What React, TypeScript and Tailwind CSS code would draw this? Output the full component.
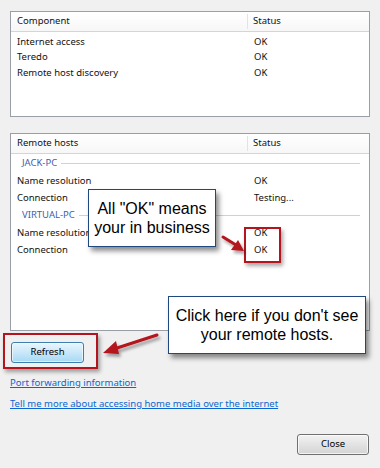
import React from "react";

const ui = { fontFamily: '"Noto Sans", "Open Sans", sans-serif' };
const callout = { fontFamily: '"Liberation Sans", Arial, sans-serif' };

function Header({ label }: { label: string }) {
  return (
    <div className="flex h-[20px] items-center border-b border-[#d5d5d5] bg-gradient-to-b from-white to-[#f7f7f7] text-[#111]">
      <div className="w-[237px] border-r border-[#e3e3e3] pl-[6px]">{label}</div>
      <div className="pl-[5px]">Status</div>
    </div>
  );
}

function Row({ name, status, h = "h-[15.5px]" }: { name: string; status: string; h?: string }) {
  return (
    <div className={`flex ${h} items-center text-[#111]`}>
      <div className="w-[237px] pl-[6px]">{name}</div>
      <div className="pl-[6px]">{status}</div>
    </div>
  );
}

function Group({ label }: { label: string }) {
  return (
    <div className="flex h-[18px] items-center gap-[4px] pl-[11px] pr-[9px] text-[#3e5fae]">
      <span>{label}</span>
      <div className="h-px flex-1 bg-[#c4d2ea]" />
    </div>
  );
}

export default function App() {
  return (
    <div className="relative h-[468px] w-[380px] overflow-hidden bg-[#f0f0f0] text-[9.5px]" style={ui}>
      <div className="flex flex-col px-[10px] pt-[11px]">
        <div className="h-[106px] w-[360px] border border-[#9a9ea6] bg-white">
          <Header label="Component" />
          <div className="pt-[2px]">
            <Row name="Internet access" status="OK" />
            <Row name="Teredo" status="OK" />
            <Row name="Remote host discovery" status="OK" />
          </div>
        </div>

        <div className="mt-[16px] h-[198px] w-[360px] border border-[#9a9ea6] bg-white">
          <Header label="Remote hosts" />
          <Group label="JACK-PC" />
          <Row name="Name resolution" status="OK" h="h-[18px]" />
          <Row name="Connection" status="Testing..." h="h-[16px]" />
          <Group label="VIRTUAL-PC" />
          <Row name="Name resolution" status="OK" h="h-[18px]" />
          <Row name="Connection" status="OK" h="h-[16px]" />
        </div>

        <button className="ml-[1px] mt-[11px] h-[21px] w-[73px] rounded-[3px] border border-[#3c7fb1] bg-gradient-to-b from-[#eaf6fd] to-[#a7d9f5] text-[9.5px] text-black shadow-[inset_0_0_0_1px_rgba(255,255,255,0.6)]">
          Refresh
        </button>

        <div className="mt-[13px] flex flex-col items-start gap-[7px] leading-[14px] text-[#0b66d0]">
          <a className="underline">Port forwarding information</a>
          <a className="underline">Tell me more about accessing home media over the internet</a>
        </div>

        <div className="mt-[23px] flex justify-end pr-[1px]">
          <button className="h-[21px] w-[72px] rounded-[3px] border border-[#707070] bg-gradient-to-b from-[#f2f2f2] to-[#d4d4d4] text-[9.5px] text-black shadow-[inset_0_0_0_1px_rgba(255,255,255,0.7)]">
            Close
          </button>
        </div>
      </div>

      {/* annotations */}
      <div className="absolute left-[244px] top-[227px] h-[36px] w-[37px] border-2 border-[#b3141e] shadow-[2px_3px_4px_rgba(0,0,0,0.35)]" />
      <div className="absolute left-[3px] top-[333px] h-[36px] w-[95px] border-2 border-[#b3141e] shadow-[2px_3px_4px_rgba(0,0,0,0.35)]" />

      <div
        className="absolute left-[88px] top-[189px] flex h-[58px] w-[128px] flex-col items-center justify-center border border-[#1f4780] bg-white text-[16px] leading-[19px] text-black shadow-[3px_4px_5px_rgba(0,0,0,0.45)]"
        style={callout}
      >
        <span>All "OK" means</span>
        <span>your in business</span>
      </div>

      <div
        className="absolute left-[168px] top-[296px] flex h-[58px] w-[198px] flex-col items-center justify-center border border-[#1f4780] bg-white text-[16px] leading-[19px] text-black shadow-[3px_4px_5px_rgba(0,0,0,0.45)]"
        style={callout}
      >
        <span>Click here if you don't see</span>
        <span>your remote hosts.</span>
      </div>

      <svg className="absolute left-0 top-0" width="380" height="468" viewBox="0 0 380 468">
        <defs>
          <filter id="sh" x="-20%" y="-20%" width="140%" height="140%">
            <feDropShadow dx="2" dy="3" stdDeviation="1.5" floodColor="#000" floodOpacity="0.35" />
          </filter>
        </defs>
        <g filter="url(#sh)" fill="#b3141e" stroke="#b3141e">
          <line x1="223" y1="237" x2="236" y2="245" strokeWidth="3" strokeLinecap="round" />
          <polygon points="244,251 231,250 238,240" stroke="none" />
          <line x1="157" y1="335" x2="117" y2="348" strokeWidth="3" strokeLinecap="round" />
          <polygon points="103,353 116,341 119,354" stroke="none" />
        </g>
      </svg>
    </div>
  );
}
